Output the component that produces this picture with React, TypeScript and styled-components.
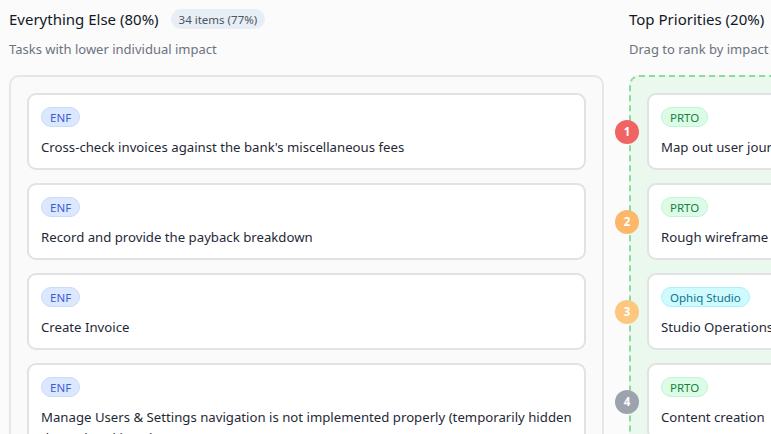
import React from "react";
import styled, { createGlobalStyle } from "styled-components";

const Global = createGlobalStyle`
  html, body { margin: 0; padding: 0; overflow: hidden; background: #fbfbfb; }
  body { font-family: "Segoe UI", "Noto Sans", "Open Sans", sans-serif; color: #1f2937; }
  * { box-sizing: border-box; }
`;

const Board = styled.div`
  display: grid;
  grid-template-columns: 595px 595px;
  column-gap: 25px;
  padding: 7px 9px;
  width: max-content;
`;

const Column = styled.section`
  display: flex;
  flex-direction: column;
`;

const HeaderRow = styled.div`
  display: flex;
  align-items: center;
  gap: 12px;
  height: 24px;
`;

const Title = styled.h2`
  margin: 0;
  font-size: 15px;
  font-weight: 400;
  color: #111827;
  line-height: 24px;
`;

const CountPill = styled.span`
  display: inline-flex;
  align-items: center;
  height: 20px;
  padding: 0 8px;
  border-radius: 999px;
  background: #e8eef6;
  color: #4b5563;
  font-size: 11.5px;
`;

const Subtitle = styled.p`
  margin: 9px 0 17px;
  font-size: 13px;
  line-height: 18px;
  color: #6b7280;
`;

const Panel = styled.div<{ $variant: "plain" | "drop" }>`
  display: flex;
  flex-direction: column;
  gap: 13px;
  padding: 16px;
  border-radius: 10px;
  border: 2px ${(p) => (p.$variant === "drop" ? "dashed #8edb9f" : "solid #e6e6e8")};
  background: ${(p) => (p.$variant === "drop" ? "#eaf8ee" : "#fafafa")};
`;

const Card = styled.div`
  position: relative;
  display: flex;
  flex-direction: column;
  align-items: flex-start;
  gap: 9px;
  padding: 12px 12px 11px;
  background: #ffffff;
  border: 2px solid #e2e2e4;
  border-radius: 9px;
`;

const tagColors = {
  enf: { bg: "#dbe8fe", fg: "#3b5bd9", bd: "#c9dafd" },
  prto: { bg: "#dcfce7", fg: "#16803c", bd: "#c2f5d3" },
  ophiq: { bg: "#cffafe", fg: "#0e7490", bd: "#aaf1fb" },
};

type TagKind = keyof typeof tagColors;

const Tag = styled.span<{ $kind: TagKind }>`
  display: inline-flex;
  align-items: center;
  height: 20px;
  padding: 0 8px;
  border-radius: 999px;
  font-size: 11.5px;
  background: ${(p) => tagColors[p.$kind].bg};
  color: ${(p) => tagColors[p.$kind].fg};
  border: 1px solid ${(p) => tagColors[p.$kind].bd};
`;

const CardText = styled.div`
  font-size: 13.2px;
  line-height: 21px;
  padding-top: 1px;
  margin-bottom: -1px;
  color: #1f2937;
`;

const rankColors = ["#f06464", "#fdb76a", "#fdc780", "#9ca3af"];

const Rank = styled.span<{ $idx: number }>`
  position: absolute;
  left: -34px;
  top: 50%;
  transform: translateY(-50%);
  width: 24px;
  height: 24px;
  border-radius: 50%;
  background: ${(p) => rankColors[p.$idx] ?? "#9ca3af"};
  color: #ffffff;
  font-size: 11.5px;
  font-weight: 700;
  display: flex;
  align-items: center;
  justify-content: center;
`;

const others: { tag: TagKind; label: string; text: string }[] = [
  { tag: "enf", label: "ENF", text: "Cross-check invoices against the bank's miscellaneous fees" },
  { tag: "enf", label: "ENF", text: "Record and provide the payback breakdown" },
  { tag: "enf", label: "ENF", text: "Create Invoice" },
  {
    tag: "enf",
    label: "ENF",
    text: "Manage Users & Settings navigation is not implemented properly (temporarily hidden due to breaking changes)",
  },
];

const top: { tag: TagKind; label: string; text: string }[] = [
  { tag: "prto", label: "PRTO", text: "Map out user journey" },
  { tag: "prto", label: "PRTO", text: "Rough wireframe" },
  { tag: "ophiq", label: "Ophiq Studio", text: "Studio Operations" },
  { tag: "prto", label: "PRTO", text: "Content creation" },
];

export default function App() {
  return (
    <>
      <Global />
      <Board>
        <Column>
          <HeaderRow>
            <Title>Everything Else (80%)</Title>
            <CountPill>34 items (77%)</CountPill>
          </HeaderRow>
          <Subtitle>Tasks with lower individual impact</Subtitle>
          <Panel $variant="plain">
            {others.map((c, i) => (
              <Card key={i}>
                <Tag $kind={c.tag}>{c.label}</Tag>
                <CardText>{c.text}</CardText>
              </Card>
            ))}
          </Panel>
        </Column>
        <Column>
          <HeaderRow>
            <Title>Top Priorities (20%)</Title>
          </HeaderRow>
          <Subtitle>Drag to rank by impact</Subtitle>
          <Panel $variant="drop">
            {top.map((c, i) => (
              <Card key={i}>
                <Rank $idx={i}>{i + 1}</Rank>
                <Tag $kind={c.tag}>{c.label}</Tag>
                <CardText>{c.text}</CardText>
              </Card>
            ))}
          </Panel>
        </Column>
      </Board>
    </>
  );
}
